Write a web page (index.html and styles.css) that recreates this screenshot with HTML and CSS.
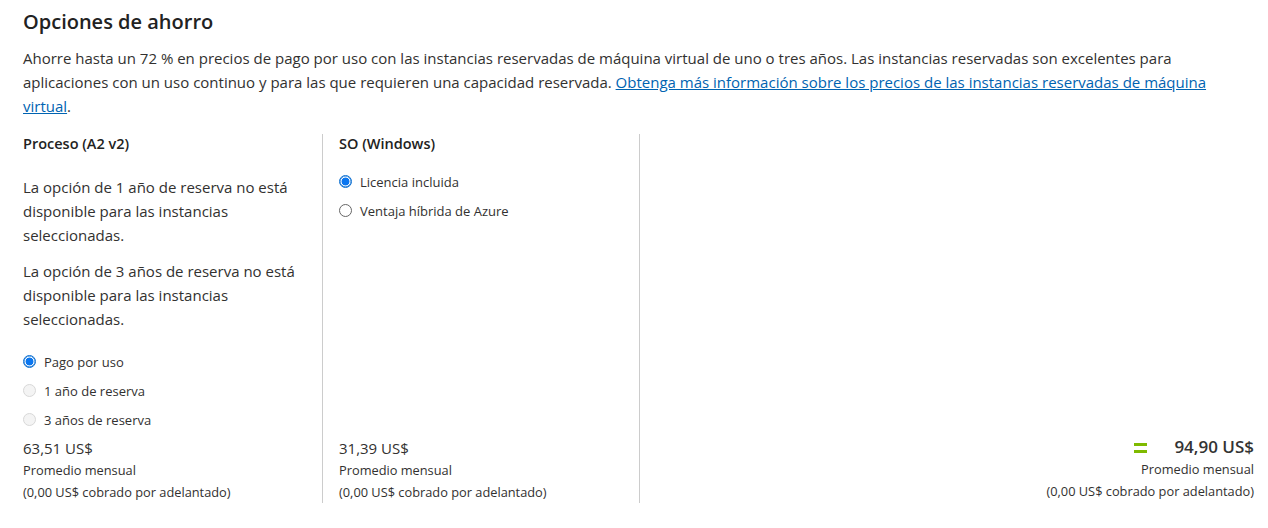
FILE: index.html
```html
<!DOCTYPE html>
<html lang="es">
<head>
<meta charset="utf-8">
<link rel="stylesheet" href="styles.css">
</head>
<body>
<section class="savings">
  <h2 class="title">Opciones de ahorro</h2>
  <p class="intro">Ahorre hasta un 72 % en precios de pago por uso con las instancias reservadas de máquina virtual de uno o tres años. Las instancias reservadas son excelentes para aplicaciones con un uso continuo y para las que requieren una capacidad reservada. <a href="#">Obtenga más información sobre los precios de las instancias reservadas de máquina virtual</a>.</p>
  <div class="cols">
    <div class="col col-compute">
      <div class="col-top">
        <h3 class="col-title">Proceso (A2 v2)</h3>
        <p class="note">La opción de 1 año de reserva no está disponible para las instancias seleccionadas.</p>
        <p class="note">La opción de 3 años de reserva no está disponible para las instancias seleccionadas.</p>
        <ul class="radios radios-compute">
          <li class="radio checked"><span class="dot"></span>Pago por uso</li>
          <li class="radio disabled"><span class="dot"></span>1 año de reserva</li>
          <li class="radio disabled"><span class="dot"></span>3 años de reserva</li>
        </ul>
      </div>
      <div class="price">
        <div class="amount">63,51 US$</div>
        <div class="sub">Promedio mensual</div>
        <div class="sub">(0,00 US$ cobrado por adelantado)</div>
      </div>
    </div>
    <div class="col col-os">
      <div class="col-top">
        <h3 class="col-title">SO (Windows)</h3>
        <ul class="radios radios-os">
          <li class="radio checked"><span class="dot"></span>Licencia incluida</li>
          <li class="radio"><span class="dot"></span>Ventaja híbrida de Azure</li>
        </ul>
      </div>
      <div class="price">
        <div class="amount">31,39 US$</div>
        <div class="sub">Promedio mensual</div>
        <div class="sub">(0,00 US$ cobrado por adelantado)</div>
      </div>
    </div>
    <div class="col col-total">
      <div class="price total">
        <div class="amount total-amount"><span class="eq" aria-label="="></span>94,90 US$</div>
        <div class="sub">Promedio mensual</div>
        <div class="sub">(0,00 US$ cobrado por adelantado)</div>
      </div>
    </div>
  </div>
</section>
</body>
</html>
```

FILE: styles.css
```css
* { box-sizing: border-box; }
html, body { margin: 0; padding: 0; background: #fff; }
body {
  font-family: "Open Sans", "Noto Sans", sans-serif;
  color: #323130;
}
.savings {
  padding: 6px 14px 0 23px;
}
.title {
  margin: 0;
  font-size: 20px;
  font-weight: 600;
  line-height: 32px;
  color: #222;
}
.intro {
  margin: 8px 0 0;
  font-size: 15px;
  line-height: 24px;
  color: #323130;
}
.intro a {
  color: #0063b1;
  text-decoration: underline;
}
.cols {
  display: flex;
  margin-top: 16px;
  height: 369px;
}
.col {
  display: flex;
  flex-direction: column;
  justify-content: space-between;
}
.col-compute {
  width: 300px;
  padding-right: 16px;
  border-right: 1px solid #ccc;
}
.col-os {
  width: 317px;
  padding-left: 16px;
  padding-right: 16px;
  border-right: 1px solid #ccc;
}
.col-total {
  flex: 1;
  justify-content: flex-end;
  align-items: flex-end;
}
.col-title {
  margin: 0;
  font-size: 14.5px;
  font-weight: 600;
  line-height: 20px;
  color: #222;
}
.note {
  margin: 21px 0 0;
  font-size: 15px;
  line-height: 24px;
}
.note + .note { margin-top: 12px; }
.radios {
  list-style: none;
  margin: 0;
  padding: 0;
}
.radios-compute { margin-top: 16px; }
.radios-os { margin-top: 13px; }
.radio {
  display: flex;
  align-items: center;
  height: 29px;
  font-size: 13px;
}
.dot {
  width: 13px;
  height: 13px;
  border-radius: 50%;
  border: 1px solid #666;
  margin-right: 8px;
  flex: none;
  background: #fff;
}
.radio.checked .dot {
  border: 1px solid #0a6ed1;
  background: radial-gradient(circle, #0a76f0 0 3.6px, #fff 4.3px);
  box-shadow: inset 0 0 0 0.5px #0a6ed1;
}
.radio.disabled .dot {
  border-color: #d8d8d8;
  background: #f4f4f4;
}
.price {
  padding-bottom: 0;
}
.amount {
  font-size: 15px;
  line-height: 23px;
}
.sub {
  font-size: 12.8px;
  line-height: 21.5px;
}
.total { text-align: right; padding-bottom: 1px; }
.total-amount {
  font-size: 17px;
  font-weight: 600;
  line-height: 24px;
  color: #333;
  display: flex;
  align-items: center;
  justify-content: flex-end;
}
.eq {
  display: inline-block;
  width: 13px;
  height: 10px;
  border-top: 3px solid #7fba00;
  border-bottom: 3px solid #7fba00;
  margin-right: 27px;
  margin-top: 1px;
}
```
